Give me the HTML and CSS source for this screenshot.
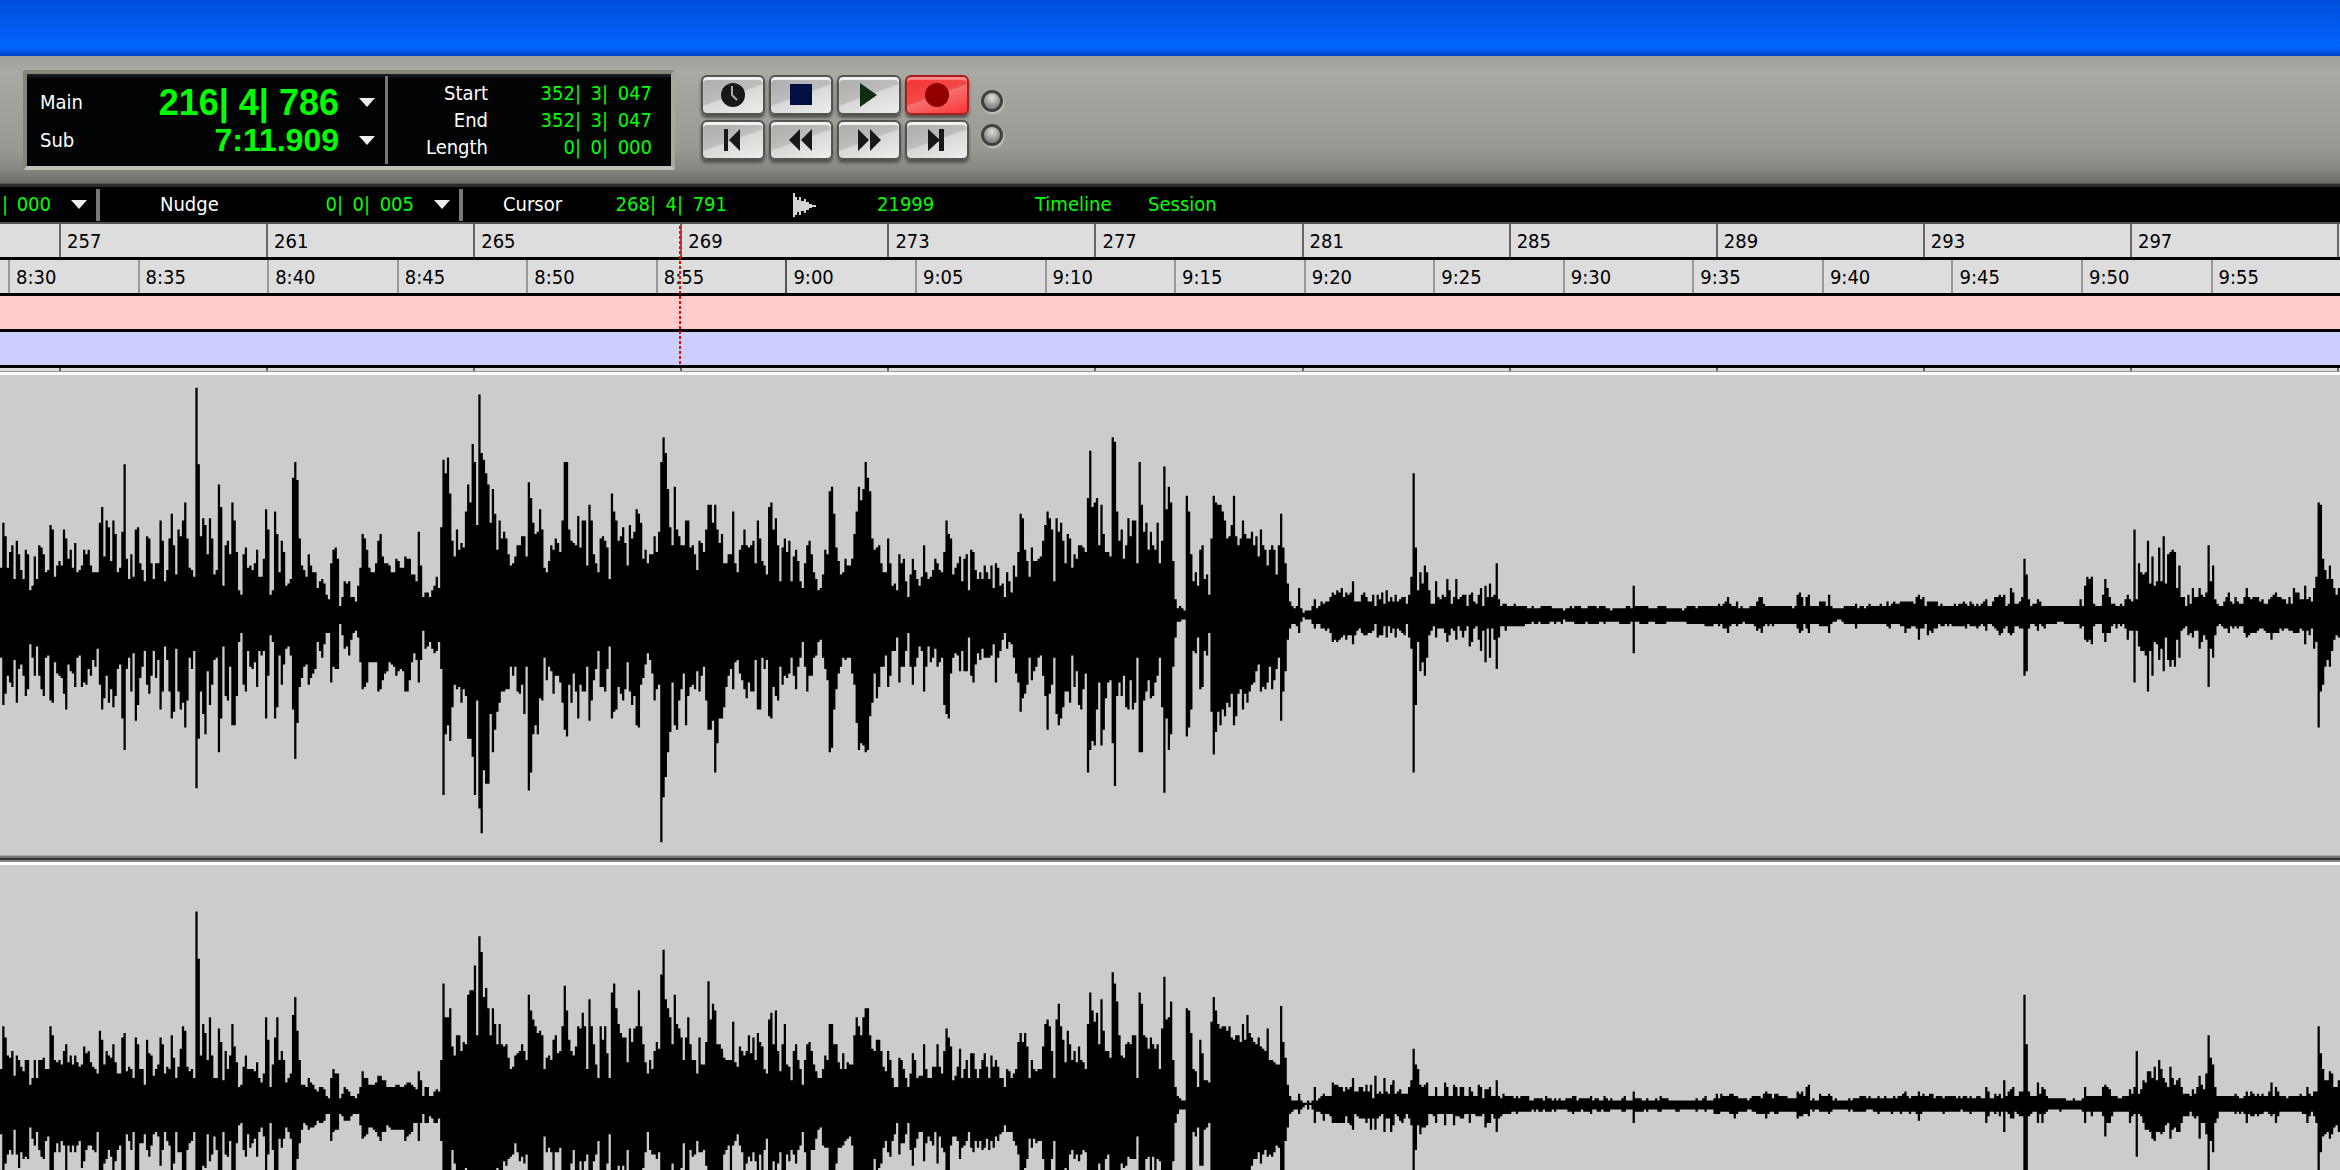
FILE: index.html
```html
<!DOCTYPE html>
<html lang="en">
<head>
  <meta charset="UTF-8" />
  <meta name="viewport" content="width=device-width, initial-scale=1" />
  <title>Edit Window</title>
  <link rel="stylesheet" href="styles.css">
</head>
<body>
  <div class="titlebar"></div>

  <!-- Transport -->
  <header class="transport">
    <div class="display">
      <div class="main-counters">
        <span class="label">Main</span>
        <span class="big main">216| 4| 786</span>
        <button class="drop" aria-label="Main counter format"></button>
        <span class="label">Sub</span>
        <span class="big sub">7:11.909</span>
        <button class="drop" aria-label="Sub counter format"></button>
      </div>
      <div class="selection">
        <span class="label">Start</span>
        <span class="count"><span>352|</span><span>3|</span><span>047</span></span>
        <span class="label">End</span>
        <span class="count"><span>352|</span><span>3|</span><span>047</span></span>
        <span class="label">Length</span>
        <span class="count"><span>0|</span><span>0|</span><span>000</span></span>
      </div>
    </div>

    <div class="buttons">
      <button aria-label="Online"><svg viewBox="0 0 24 24"><circle cx="12" cy="12" r="12" fill="#181818"/><path d="M11 3v9l5 5" fill="none" stroke="#aaa" stroke-width="2"/></svg></button>
      <button aria-label="Stop"><svg viewBox="0 0 24 24"><path d="M1 1h22v21H1z" fill="#001040"/></svg></button>
      <button aria-label="Play"><svg viewBox="0 0 24 24"><path d="M3 0l17 12L3 24z" fill="#0d2f10"/></svg></button>
      <button class="record" aria-label="Record"><svg viewBox="0 0 24 24"><circle cx="12" cy="12" r="12" fill="#930000"/></svg></button>
      <button aria-label="Return to zero"><svg viewBox="0 0 24 24"><path d="M3 1h4v22H3zM19 1v22L8 12z" fill="#181818"/></svg></button>
      <button aria-label="Rewind"><svg viewBox="0 0 24 24"><path d="M11 1v22L0 12zM23 1v22L12 12z" fill="#181818"/></svg></button>
      <button aria-label="Fast forward"><svg viewBox="0 0 24 24"><path d="M1 1l11 11L1 23zM13 1l11 11-11 11z" fill="#181818"/></svg></button>
      <button aria-label="Go to end"><svg viewBox="0 0 24 24"><path d="M3 1l12 11L3 23zM14 1h5v22h-5z" fill="#181818"/></svg></button>
    </div>
    <div class="leds">
      <span class="led"></span>
      <span class="led"></span>
    </div>
  </header>

  <!-- Grid / nudge / cursor -->
  <div class="infobar">
    <span class="grid-value"><span>|</span><span>000</span></span>
    <button class="drop" aria-label="Grid value"></button>
    <span class="sep"></span>
    <span class="label nudge">Nudge</span>
    <span class="count nudge-value"><span>0|</span><span>0|</span><span>005</span></span>
    <button class="drop" aria-label="Nudge value"></button>
    <span class="sep"></span>
    <span class="label cursor">Cursor</span>
    <span class="count cursor-value"><span>268|</span><span>4|</span><span>791</span></span>
    <svg class="wave-icon" viewBox="0 0 24 24"><path d="M0 0h2v4h2v3h2V4h2v4h3v-2h2v3h3v2h3v1h4v2h-4v1h-3v2h-3v3h-2v-2H8v4H6v-3H4v3H2v4H0z" fill="#d4d4d4"/></svg>
    <span class="level">21999</span>
    <a href="#timeline" class="timeline">Timeline</a>
    <a href="#session" class="session">Session</a>
  </div>

  <!-- Rulers -->
  <section class="rulers" id="timeline">
    <div class="ruler bars">
      <span>257</span><span>261</span><span>265</span><span>269</span><span>273</span><span>277</span><span>281</span><span>285</span><span>289</span><span>293</span><span>297</span>
    </div>
    <div class="ruler minutes">
      <span>8:30</span><span>8:35</span><span>8:40</span><span>8:45</span><span>8:50</span><span>8:55</span><span class="minute">9:00</span><span>9:05</span><span>9:10</span><span>9:15</span><span>9:20</span><span>9:25</span><span>9:30</span><span>9:35</span><span>9:40</span><span>9:45</span><span>9:50</span><span>9:55</span>
    </div>
    <div class="ruler tempo"></div>
    <div class="ruler markers"></div>
    <div class="playhead"></div>
  </section>
  <div class="bars stub">
    <span></span><span></span><span></span><span></span><span></span><span></span><span></span><span></span><span></span><span></span><span></span>
  </div>

  <!-- Tracks -->
  <main class="tracks" id="session">
    <div class="track"><svg viewBox="0 0 1042 480" preserveAspectRatio="none" role="img" aria-label="Left channel"><path id="left"/></svg></div>
    <div class="divider"></div>
    <div class="track"><svg viewBox="0 0 1042 480" preserveAspectRatio="none" role="img" aria-label="Right channel"><path id="right"/></svg></div>
  </main>

  <script src="waveform.js"></script>
</body>
</html>
```
FILE: styles.css
```css
* {
  box-sizing: border-box;
}
body {
  margin: 0;
  height: 100vh;
  overflow: hidden;
  display: flex;
  flex-direction: column;
  background: #ccc;
  font-family: 'DejaVu Sans Condensed', 'DejaVu Sans', sans-serif;
  font-size: 20px;
  line-height: 27px;
  color: #00ff00;
}
button {
  padding: 0;
  border: none;
  background: none;
  cursor: pointer;
}
a {
  color: inherit;
  text-decoration: none;
}
.label {
  color: #fff;
}
.titlebar {
  flex: none;
  height: 56px;
  background: linear-gradient(#0050dc, #0054e3 20%, #005ef4 60%, #0066ff 82%, #005cf0 90%, #003fc4);
}

/* transport */
.transport {
  flex: none;
  height: 131px;
  padding: 14px 0 0 23px;
  display: flex;
  align-items: flex-start;
  background: linear-gradient(#a19f9a, #aaa9a4 12%, #a1a09b 40%, #9a9994 70%, #888782 86%, #6d6c67 97%, #2c2b27 98%);
}
.display {
  display: flex;
  width: 652px;
  height: 100px;
  border: 4px solid #85847b;
  border-bottom-color: #c4c2b8;
  border-right-color: #a9a89f;
  border-radius: 3px;
  background: #020404;
  box-shadow: inset 0 4px 2px -1px #1b1e1e;
}
.main-counters {
  width: 361px;
  margin: 2px 0;
  padding: 6px 10px 4px 13px;
  display: grid;
  grid-template-columns: 60px 1fr 36px;
  grid-template-rows: 41px 35px;
  align-items: center;
  border-right: 3px solid #777;
}
.big {
  justify-self: end;
  font-family: 'Liberation Sans', Arial, sans-serif;
  font-weight: bold;
}
.main {
  font-size: 36px;
}
.sub {
  font-size: 32px;
}
.drop {
  width: 16px;
  height: 9px;
  background: #eee;
  clip-path: polygon(0 0, 100% 0, 50% 100%);
}
.main-counters .drop {
  justify-self: end;
}
.selection {
  flex: 1;
  display: grid;
  grid-template-columns: 100px 1fr;
  grid-auto-rows: 27px;
  padding: 6px 19px 0 0;
  text-align: right;
}
.count {
  display: grid;
  grid-template-columns: 1fr 27px 44px;
  text-align: right;
}
.buttons {
  margin: 5px 0 0 26px;
  display: grid;
  grid-template-columns: repeat(4, 64px);
  grid-auto-rows: 40px;
  gap: 5px 4px;
}
.buttons button {
  display: flex;
  align-items: center;
  justify-content: center;
  border: 2px solid #55544f;
  border-radius: 6px;
  background: linear-gradient(160deg, #aaa 0, #bdbdbd 48%, #d8d8d8 52%, #eee 100%);
  box-shadow: inset 0 3px 1px #f4f4f4, 0 3px 3px #55544f;
}
.buttons .record {
  border-color: #a3201f;
  background: linear-gradient(160deg, #f52f2f 0, #f24a4a 48%, #f47070 52%, #f33 100%);
  box-shadow: inset 0 3px 1px #ff8a8a, 0 3px 3px #55544f;
}
.buttons svg {
  width: 24px;
  height: 24px;
}
.leds {
  margin: 20px 0 0 12px;
  display: grid;
  gap: 12px;
}
.led {
  width: 22px;
  height: 22px;
  border: 3px solid #42413e;
  border-radius: 50%;
  background: radial-gradient(circle at 50% 30%, #ddd, #888 70%);
  box-shadow: 1px 2px 2px #c8c7c2;
}

/* info bar */
.infobar {
  flex: none;
  height: 37px;
  padding-left: 2px;
  display: flex;
  align-items: center;
  background: #000;
  border-bottom: 2px solid #555;
}
.grid-value {
  width: 49px;
  display: flex;
  justify-content: space-between;
}
.infobar .drop {
  margin: 0 9px 0 20px;
}
.sep {
  width: 4px;
  height: 32px;
  background: #777;
}
.nudge {
  width: 150px;
  margin-left: 60px;
}
.nudge-value,
.cursor-value {
  width: 102px;
}
.nudge-value {
  margin-left: 2px;
}
.cursor {
  width: 80px;
  margin-left: 40px;
}
.cursor-value {
  width: 144px;
}
.wave-icon {
  width: 24px;
  height: 24px;
  margin: 0 60px 0 66px;
}
.level {
  width: 158px;
}
.timeline {
  width: 113px;
}

/* rulers */
.rulers {
  flex: none;
  position: relative;
}
.ruler {
  height: 36px;
  border-bottom: 3px solid #000;
  background: #ddd;
  color: #000;
}
.bars,
.minutes {
  display: flex;
}
.bars {
  padding: 0 1px 0 59px;
}
.minutes {
  padding-left: 8px;
}
.bars span,
.minutes span {
  flex: 1 1 0;
  padding: 4px 0 0 6px;
  border-left: 2px solid #666;
}
.bars span:last-child {
  border-right: 2px solid #666;
}
.minutes span {
  border-left-color: #999;
}
.minutes .minute {
  border-left-color: #555;
}
.tempo {
  background: #ffcbcb;
}
.markers {
  background: #cdcdff;
}
.playhead {
  position: absolute;
  top: 2px;
  bottom: 3px;
  left: 29%;
  width: 2px;
  background: repeating-linear-gradient(#f00 0 3px, transparent 3px 5px);
}
.stub {
  flex: none;
  height: 4px;
  border-bottom: 1px solid #999;
  background: #ddd;
}
.stub span {
  padding: 0;
}

/* tracks */
.tracks {
  flex: 1;
  overflow: hidden;
  border-top: 3px solid #fff;
}
.track svg {
  display: block;
  width: 100%;
  height: 480px;
}
.divider {
  height: 10px;
  background: linear-gradient(#aaa 0 1px, #777 1px 3px, #333 3px 5px, #888 5px 7px, #fff 7px);
}
```
FILE: waveform.js
```js
// Peaks per column, "up,down" pairs. A row starts at the given column,
// "*n" repeats a pair n times.
const left = [
  [0, '21,19 41,40 35,35 21,27 28,30 31,32 16,20 33,39 27,24 20,22 16,27 29,36 27,33 11,13 13,19 26,27 16,14 31,27 30,33 27,36 19,19 20,18 40,38 38,39 17,21 22,26'],
  [26, '24,27 22,28 38,35 34,42 25,22 29,25 21,26 32,32 19,19 20,18 22,32 29,30 27,31 29,24 22,27 19,20 19,23 19,15 41,31 48,42 26,37 42,27 39,39 24,33 42,41 36,36'],
  [52, '19,24 21,22 37,46 67,60 25,24 16,19 27,34 17,17 38,47 39,40 23,28 20,23 15,16 35,31 34,35 23,27 16,16 23,28 23,20 42,42 33,34 15,14 20,20 34,34 45,46 31,43'],
  [78, '18,15 38,34 35,42 42,39 50,50 34,38 21,19 20,24 17,16 101,77 67,55 35,34 43,44 40,53 27,25 43,40 34,31 18,20 20,19 58,61 48,46 13,14 31,36 33,38 27,23 50,49 42,49 28,36'],
  [106, '11,12 9,8 27,31 30,34 21,16 22,23 20,24 23,21 29,32 17,16 17,18 25,16 47,46 38,27 9,9 11,12 46,46 36,41 19,18 33,31 28,22 13,15 14,14 16,18 61,42 68,64 60,48 34,32 22,28'],
  [135, '20,23 17,22 27,31 22,28 19,26 19,24 12,12 15,16 16,19 14,13 9,8 7,8 23,30 29,23 30,24 25,24 4,4 8,9 15,15 14,14 15,18 8,11 8,8 6,7 13,10 21,21'],
  [161, '36,33 34,32 29,30 21,21 19,21 19,21 23,21 33,34 36,33 26,29 23,26 23,25 22,21 19,22 19,23 25,27 24,25 21,24 21,25 26,34 25,34 25,29 18,21 18,17 15,20 37,30 22,20'],
  [188, '8,7 10,15 10,14 8,12 11,15 13,17 17,16 12,12 39,24 69,80 63,53 70,49 54,56 33,41 26,31 38,33 29,32 32,39 30,33 46,36 58,55 50,55 76,63 68,80 40,38 98,86'],
  [214, '72,97 69,69 63,75 58,75 41,44 56,61 45,51 29,43 42,39 34,34 37,34 34,33 27,33 22,23 23,27 26,23 31,34 31,35 35,31 35,44 26,23 59,78 52,70 41,53 36,49 37,53'],
  [240, '47,37 38,38 21,19 19,29 24,23 31,25 29,35 34,27 32,27 28,30 42,39 68,51 68,54 38,31 33,39 32,26 31,34 44,46 30,31 42,34 42,34 22,23 49,47 42,38 27,29 23,24 19,16'],
  [267, '34,32 35,32 33,34 30,24 16,14 54,46 46,43 42,42 33,32 35,35 39,38 32,33 22,21 40,34 34,40 37,36 47,49 45,50 41,31 25,28 29,22 23,17 27,20 27,26 35,38 28,33 37,31'],
  [294, '68,101 79,81 72,72 56,61 39,52 31,30 57,49 38,51 35,38 31,33 31,26 42,49 42,36 30,32 31,31 27,33 20,25 33,34 32,27 28,23 38,38 49,51 49,51 41,47 49,70 38,57 32,46'],
  [321, '36,46 23,41 23,32 27,27 27,24 46,33 23,21 19,20 29,26 31,29 38,33 31,37 30,30 31,34 33,34 23,20 42,42 34,42 24,19 22,24 18,20 48,45 50,46 38,32 43,36 31,38 15,23'],
  [348, '30,31 34,27 28,28 33,26 15,19 26,27 29,33 24,23 15,19 12,12 23,23 31,34 33,27 27,27 19,19 16,18 11,12 12,11 18,19 29,24 27,29 55,61 57,59 45,42 30,33 24,26 18,23'],
  [375, '19,19 25,20 22,19 22,19 25,26 36,31 46,48 57,60 51,57 56,58 68,61 61,60 55,45 34,39 29,26 30,37 31,32 23,23 19,23 19,18 34,32 23,27 13,16 14,16 11,10 27,30 23,23'],
  [402, '25,23 15,16 8,8 18,23 25,31 20,23 16,19 13,14 17,16 31,34 19,23 16,14 17,21 20,19 25,15 23,23 20,21 19,19 28,40 42,44 36,46 34,26 18,19 21,17 23,18 26,25 15,16'],
  [429, '25,25 27,25 11,10 29,27 28,30 20,22 16,17 19,20 16,15 22,19 19,19 16,19 22,18 12,13 23,30 21,19 13,16 14,11 8,8 19,15 15,12 10,13 22,19 17,26 28,30 45,43 43,37'],
  [456, '29,35 24,31 17,19 30,29 24,25 24,23 25,19 26,18 33,27 40,36 46,51 43,35 38,31 15,19 43,44 37,49 41,46 33,41 23,34 36,34 34,39 21,18 27,32 25,25 31,40 31,42 30,33 28,26'],
  [484, '52,70 73,60 48,56 50,58 52,42 31,30 49,58 36,51 28,37 28,30 26,29 79,57 77,76 46,36 33,30 38,36 25,27 31,41 43,42 35,29 42,42 42,39 23,19 68,61 49,61 37,38 41,34'],
  [511, '29,29 37,37 31,36 29,30 41,27 23,19 33,41 66,79 47,46 57,60 50,53 24,23 7,10 3,3 4,3 3,2 2,2 53,54 46,50 27,42 15,16 19,17 13,10 29,33 31,32 16,16 18,18 9,8 34,43'],
  [540, '53,62 50,52 49,43 49,49 46,42 42,45 34,39 35,41 40,35 53,49 35,45 31,35 34,33 42,42 36,35 34,39 34,34 37,31 31,30 35,25 26,22 38,34 31,32 29,33 22,30 29,23 31,33'],
  [567, '29,29 18,24 31,19 45,47 30,34 23,25 14,11 6,6 4,4 3,4 4,5 12,8 3,3 1,1 2,2 2,2 2,2 4,4 7,6 3,4 4,4 6,6 5,6 6,7 6,6 8,8 10,12 9,11 11,12 10,11 12,10 8,9 10,11 9,9 10,9'],
  [602, '15,13 6,9 6,7 6,6 9,8 10,9 8,9 6,8 6,8 9,7 4,4 9,10 7,9 10,9 5,5 11,10 6,5 8,8 6,6 9,10 6,6 7,7 8,8 8,9 5,4 9,10 17,15 63,70 30,40 11,12 19,25 14,21 22,27 19,19'],
  [636, '11,9 5,7 5,5 15,10 8,6 7,6 9,6 8,8 16,12 11,9 5,6 8,7 16,11 7,5 8,7 9,10 9,7 4,5 9,14 10,12 6,6 5,5 9,11 12,16 4,7 13,21 8,6 14,19 8,6 9,11 23,24 7,10 4,5'],
  [669, '5,5 5,7 4,5*3 5,5 4,5*4 4,4 3,4*2 4,3 3,4*2 3,3 4,4*4 4,3 3,3 3,4 3,3*2 3,4 2,2 3,3*2 4,3 3,3 4,4*3 3,4*2 3,3 4,4*4 3,4 4,3*2 4,4 3,3*2 2,3 3,3*3 3,4*3 4,4*2 3,3'],
  [727, '13,17 4,3*2 4,4*4 3,3*3 3,4 4,4*4 3,3*7 2,3 3,3 4,4*4 3,4 4,4*3 4,5*4 4,4*2 5,5 4,4 5,6 6,6 8,8 5,5 4,4 4,4 6,5 3,4 4,4 3,3 3,4*2 4,4*2 4,5 6,7 8,6 8,8 5,5 4,4 4,5 4,4 4,5 4,4*4'],
  [798, '3,4 4,4 9,6 10,8 8,7 4,4 8,6 9,8 4,4*4 6,5*3 4,5 9,8 4,4 3,3*2 3,2*2 3,3 4,4*5 5,6 3,4 4,4*2 3,4 4,4 5,4 4,4*4 5,4 4,4 4,4 6,5 4,6 5,4 6,4 5,4*2 6,5*2 6,8 6,6 6,6 6,5 5,5 8,6 9,11'],
  [855, '7,6 8,6 4,4 6,9 6,7 6,8 6,6*2 4,4 5,5 4,5 4,4 4,5 4,4 4,5 5,5 4,5 5,5*2 6,5 5,6 4,4 6,5 5,5 4,5 5,6 4,5 5,4 6,5 7,7 4,4*2 6,5 8,6 8,7 9,9 8,8 9,6 4,5 5,8 12,9 10,8 5,5 5,5 6,6 8,6'],
  [901, '25,27 18,25 7,6 4,4 5,4 5,5 7,7 6,4 4,5 4,6 4,4*5 4,3*3 4,4*7 7,6 4,5 13,11 17,12 16,11 17,13 5,5 4,4*3 9,8 16,12 12,8 8,8 5,5 5,4 4,6 4,4 5,5 4,4 7,6 9,11 7,7 6,7'],
  [950, '38,30 7,7 23,14 19,16 18,16 19,18 33,34 14,16 26,27 13,12 15,13 30,20 15,15 35,25 14,10 27,20 28,23 29,20 28,23 12,11 22,19 8,7 8,6 4,5 9,9 5,8 12,10 8,7 8,7 12,15 9,12 8,9 10,11'],
  [983, '31,32 15,15 22,19 7,9 5,5 4,4 4,5 6,6 8,6 10,8 6,5 5,6 8,5 6,6 5,5 5,5 8,8 12,10 8,9 7,8 8,8*2 8,7 6,6 7,6 5,7 5,8 7,8 8,11 9,8 10,8 8,8 8,6 7,7 7,6 5,6 8,7 5,7 12,8 10,8*2 7,6 7,7'],
  [1026, '13,13 7,7 8,9 6,6 12,15 17,12 50,50 49,34 25,31 20,23 16,20 22,23 16,16 12,11 9,9 12,10']
];

const right = [
  [0, '16,13 35,30 30,26 22,22 21,20 24,22 13,11 22,22 20,28 17,21 15,24 20,23 20,24 9,10 12,15 20,18 12,12 20,20 20,23 21,24 16,16 16,14 35,30 31,30 20,21 19,17 20,21 18,16'],
  [28, '24,18 27,30 19,18 22,21 18,18 22,21 19,18 17,16 18,28 26,25 23,20 24,18 19,18 17,20 16,21 14,12 33,30 29,30 18,26 24,24 22,20 21,23 27,30 19,25 14,20 14,18 30,30 32,30'],
  [56, '15,13 17,16 16,20 12,12 30,30 27,30 16,17 16,17 9,13 29,20 23,23 22,18 13,13 16,12 18,14 30,27 27,20 14,12 17,16 16,18 31,30 21,26 12,12 17,21 25,21 35,30 33,30 17,20'],
  [84, '15,17 16,16 12,12 86,60 65,50 22,30 36,27 32,28 20,13 39,25 22,22 12,14 12,20 34,30 28,30 11,12 24,22 16,23 22,16 36,30 26,30 19,17 8,9 9,8 17,20 22,23 16,13 16,19'],
  [112, '16,17 15,15 19,23 12,12 10,10 14,14 39,30 29,22 8,8 18,20 30,30 39,30 20,15 24,19 20,15 10,10 12,12 14,15 40,30 48,30 33,24 20,17 9,11 9,8 8,9 12,11 10,10 9,10 7,9'],
  [141, '6,7 8,8 8,8 7,7 4,4 3,4 12,16 16,12 14,11 14,11 3,4 5,5 8,7 7,7 6,7 4,5 4,4 3,4 5,4 8,9 15,15 12,14 12,13 9,10 9,10 9,11 10,12 13,14 13,16 11,12 11,12 8,9 8,10 8,11 8,11'],
  [176, '9,11 9,11 8,11 8,11 9,16 10,14 10,13 9,12 8,8 7,8 15,16 11,8 4,4 8,8 8,8 4,5 4,6 6,8 7,8 6,6 20,16 54,30 39,30 39,30 43,30 26,20 22,26 31,30 31,30 24,30 28,30 27,28'],
  [208, '49,30 51,30 51,30 62,30 31,30 75,50 68,50 48,30 52,30 43,30 31,30 43,30 36,30 27,28 36,30 27,30 26,25 27,27 21,24 16,23 17,22 22,17 23,21 24,25 27,23 24,26 20,22'],
  [235, '49,30 42,30 38,30 35,30 32,30 33,30 31,30 16,14 21,21 22,19 20,21 29,30 31,21 23,21 24,19 35,30 53,30 42,30 29,29 24,26 22,20 26,30 35,30 34,25 41,30 35,25 16,22'],
  [262, '47,30 35,30 27,25 18,22 12,16 35,30 29,30 35,30 23,26 12,13 50,30 54,30 43,30 36,27 32,30 30,27 30,30 19,20 34,30 28,30 34,30 35,30 51,30 35,30 27,28 19,21 14,12'],
  [289, '20,20 16,22 24,22 28,24 25,21 58,60 69,60 47,30 43,30 39,30 27,26 49,30 36,30 34,30 30,28 20,17 30,30 39,30 27,20 20,23 20,22 14,16 30,21 18,21 18,20 28,27 55,30 38,30'],
  [317, '45,30 42,30 27,30 27,30 25,30 21,22 20,20 20,18 20,30 37,18 19,16 17,13 26,18 24,21 22,30 24,26 31,23 23,25 30,21 20,25 32,30 28,22 26,30 16,20 14,15 38,30 41,30 27,25'],
  [345, '42,30 24,26 15,21 27,30 36,30 18,22 17,25 11,20 24,22 27,26 20,20 16,18 9,12 20,21 27,30 28,30 24,20 18,20 15,15 12,11 12,10 16,18 22,19 20,19 36,30 36,30 27,30 27,26'],
  [373, '19,19 16,19 23,18 16,16 19,15 18,14 18,18 31,30 39,30 35,30 31,30 39,30 43,30 43,30 31,30 25,30 24,24 29,30 29,28 24,26 17,19 15,16 24,21 20,23 12,16 8,13 8,8 21,22'],
  [401, '20,17 16,17 12,13 8,8 14,20 23,27 20,19 12,15 13,12 13,12 27,25 16,17 12,14 12,16 17,18 17,12 27,26 17,14 14,19 24,21 34,30 30,30 26,18 11,14 13,14 17,16 25,24 12,19'],
  [429, '16,18 20,16 12,12 23,19 23,21 16,16 12,19 16,16 20,20 23,19 17,15 12,20 22,16 17,19 20,14 17,16 12,13 12,12 8,9 16,12 15,12 12,12 14,16 16,18 28,22 32,30 28,30 32,28'],
  [457, '26,24 12,15 20,19 16,15 15,17 16,16 16,16 26,24 36,30 38,30 35,30 24,24 12,16 38,30 45,30 35,30 29,30 19,28 33,29 27,22 20,20 24,24 19,22 26,25 20,22 19,20 16,21 36,30'],
  [485, '50,30 42,30 37,30 41,30 27,26 47,30 33,30 24,24 24,22 21,30 59,40 54,40 46,30 31,30 22,26 21,28 27,27 28,23 27,24 31,24 31,24 12,14 50,30 45,30 31,30 30,24 25,23 30,30'],
  [513, '27,23 25,30 27,24 16,25 34,30 57,60 38,60 39,30 46,30 20,25 8,8 4,4 3,2 2,2 2,2 43,30 42,30 32,30 16,12 15,14 8,10 29,27 23,27 11,11 11,10 10,8 37,30 48,30 42,30'],
  [542, '36,30 34,30 35,30 35,30 33,30 35,30 30,30 29,30 31,30 31,30 28,30 36,30 29,30 40,30 32,30 30,27 28,24 27,24 30,21 26,26 25,22 24,20 34,23 20,22 20,23 19,21 18,18 18,19'],
  [570, '44,30 28,30 21,16 9,10 4,4 2,3 2,2 2,2 5,4 2,2 1,1 1,0 2,2 1,0 2,2 8,8 2,3 3,3 4,4 5,7 4,4 4,4 4,5 10,8 9,8 9,8 8,8 8,8 6,8 8,5 7,8 8,9 12,11 6,4 6,5 8,6 8,6 6,6 9,8 6,6'],
  [610, '9,11 3,6 13,11 5,6 6,5 5,4 12,12 6,6 5,6 9,12 11,9 5,4 6,5 7,7 5,8 5,6 5,4 8,6 11,9 25,30 18,20 16,9 9,13 8,10 9,10 10,9 4,4*2 4,5 8,8 4,4*3 10,9 8,4 4,4*2 9,9 8,5 4,5'],
  [650, '8,6 8,6 4,4 4,4 8,8 6,4 4,4 4,5 9,5 8,5 3,4 7,10 7,8 8,8 4,4 4,6 11,12 4,6 3,5 5,4 4,4*3 4,3 3,3 4,4 3,3 4,3*4 2,3 2,2 3,3 3,2 3,3*2 2,2 4,3 3,3*2 2,2 3,3 2,2 3,2 2,2'],
  [695, '2,2*2 3,2 3,3*2 4,4 4,3 2,3 3,3 3,2 3,3*3 4,4 2,2 3,2 3,3 2,3 2,2 4,3 3,3 2,3 3,2 2,2*4 3,3 4,3 2,2*3 6,8 3,3*3 2,3 2,2 3,3 2,2*3 3,2 2,3 4,3 3,2*3 2,2*3 2,3*2 2,2*7 3,3 2,2 2,2 3,2'],
  [759, '4,3 2,2*3 3,4 5,4 3,4 5,3 4,3*3 5,4*2 4,6 4,4 3,3*4 2,2 3,2 4,3*2 4,4*2 3,4 5,4 6,6 5,4 5,3 3,3 5,4*2 4,3*4 3,3*4 6,6 5,5 6,5 4,4 8,4 9,5 2,2 3,3 2,2 2,2 5,3 4,3*3 5,4 4,3 2,2 3,2 2,2*5'],
  [823, '3,3 2,2 3,3*3 4,3*3 3,2 4,2 3,2 3,3*2 4,4 3,3*2 4,3 3,3 3,3 3,4 4,3 3,3 4,3 4,4 5,3 6,3 4,3 3,4 4,3*2 4,4 6,7 4,4 5,3 4,3 4,3 5,3 5,3 3,3 4,3*3 3,4 4,3*5 3,3 4,3 3,2 4,3*2 3,3 4,4 3,3*2 4,3*2 3,3'],
  [884, '8,8 6,5 3,3*2 5,4 4,3 5,5 3,3 11,12 4,3 6,4 7,6 8,6 4,3 4,4 6,5 6,5 49,60 27,40 6,5 4,4 4,3 4,3 10,8 5,4 8,8 7,4 4,3 3,2*5 3,3 3,2*2 2,2*3 3,2 2,2*3 3,3 8,8 4,3*2 4,5 4,3*4 8,5 9,14 8,8 7,8'],
  [940, '4,5 4,3*2 3,3*2 4,3*3 7,8 5,5 8,4 24,23 5,4 7,5 11,8 10,11 15,11 15,12 12,15 17,16 11,12 20,12 16,13 12,12 10,9 8,8 17,15 12,11 9,10 11,12 12,12 8,8 5,5*3 4,3 7,5 5,6 8,5 13,15 9,8 7,8 14,13'],
  [983, '31,40 21,16 18,21 8,8 4,6 4,3*7 5,4 4,3 3,4 3,3 4,4 6,8 4,4 6,5 5,5 4,4 5,5 4,4 5,4 4,3 4,3 6,4 10,5 4,4 8,8 6,5 4,3*3 3,3 4,3*5 5,3 4,4 4,4 8,8 5,5 4,3 6,5 6,8 35,40 23,21 16,14 11,13 11,12'],
  [1037, '15,15 14,13 8,10 8,9 11,12']
];

const STEP = 2.25;   // height of one amplitude step
const MIDDLE = 240;
const COLUMNS = 1042;

function readPeaks(rows) {
  const peaks = [];
  rows.forEach(([start, text]) => {
    let col = start;
    text.split(' ').forEach(item => {
      const [pair, times] = item.split('*');
      for (let i = 0; i < (times || 1); i++) {
        peaks[col++] = pair.split(',').map(Number);
      }
    });
  });
  // a column without its own peak keeps the one before it
  for (let i = 1; i < COLUMNS; i++) {
    if (!peaks[i]) peaks[i] = peaks[i - 1];
  }
  return peaks.slice(0, COLUMNS);
}

function drawWave(id, rows) {
  const peaks = readPeaks(rows);
  let d = 'M0 ' + MIDDLE;
  peaks.forEach((p, i) => {
    d += `V${MIDDLE - p[0] * STEP}H${i + 1}`;
  });
  for (let i = COLUMNS - 1; i >= 0; i--) {
    d += `V${MIDDLE + p1(peaks[i])}H${i}`;
  }
  document.getElementById(id).setAttribute('d', d + 'Z');
}

function p1(peak) {
  return peak[1] * STEP;
}

drawWave('left', left);
drawWave('right', right);
```
